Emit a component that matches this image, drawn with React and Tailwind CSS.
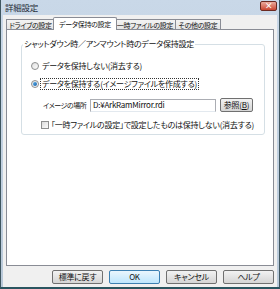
import React from 'react';

function Tab({ label, active, w }) {
  if (active) {
    return (
      <div
        className={`${w} h-[13px] -mx-[2px] relative z-10 bg-white border border-b-0 border-[#898c95] rounded-t-[2px] flex items-center justify-center pt-[1px]`}
      >
        {label}
      </div>
    );
  }
  return (
    <div
      className={`${w} h-[11px] mt-[2px] bg-gradient-to-b from-[#f3f3f3] to-[#e3e3e3] border border-b-0 border-[#898c95] -ml-[1px] first:ml-0 flex items-center justify-center pt-[1px]`}
    >
      {label}
    </div>
  );
}

function Radio({ checked }) {
  return (
    <div className="w-[8px] h-[8px] rounded-full border border-[#8e8f8f] bg-gradient-to-br from-[#e0e0e0] to-[#fdfdfd] flex items-center justify-center shrink-0">
      {checked && <div className="w-[4px] h-[4px] rounded-full bg-gradient-to-br from-[#59b2ef] to-[#1a5fa5]" />}
    </div>
  );
}

function Btn({ children, isDefault }) {
  return (
    <div
      className={`w-[51px] h-[14px] rounded-[2px] border flex items-center justify-center ${
        isDefault
          ? 'border-[#3c7fb1] bg-gradient-to-b from-[#eaf6fd] to-[#bee6fd]'
          : 'border-[#707070] bg-gradient-to-b from-[#f2f2f2] to-[#d5d5d5]'
      }`}
    >
      {children}
    </div>
  );
}

export default function App() {
  return (
    <div className="w-[280px] h-[289px] flex flex-col bg-gradient-to-b from-[#c9d8e8] to-[#b9c9d9] border border-t-0 border-[#3f5660] border-b-[2px] border-b-[#2a5560] leading-none font-['Noto_Sans_CJK_JP','Noto_Sans',sans-serif] [font-feature-settings:'palt'] text-[8px] tracking-[-0.25px] text-[#111] whitespace-nowrap">
      {/* title bar */}
      <div className="h-[15px] flex items-center justify-between pl-[4px] pr-[2px]">
        <span className="text-[8.5px] text-[#1e2a36]">詳細設定</span>
        <div className="w-[17px] h-[10px] mb-[3px] rounded-[2px] border border-[#6b2a22] bg-gradient-to-b from-[#e9a99c] to-[#c9432f] flex items-center justify-center text-white text-[8px] font-bold">
          ×
        </div>
      </div>

      {/* client area */}
      <div className="flex-1 mx-[2px] bg-[#f0f0f0] px-[3px] pt-[2px] flex flex-col">
        <div className="flex h-[12px] items-start text-[7px] tracking-[-0.3px]">
          <Tab label="ドライブの設定" w="w-[49px]" />
          <Tab label="データ保持の設定" w="w-[64px]" active />
          <Tab label="一時ファイルの設定" w="w-[62px]" />
          <Tab label="その他の設定" w="w-[46px]" />
        </div>

        <div className="h-[237px] bg-white border border-[#898c95] pt-[14px] pl-[14px] pr-[8px]">
          <div className="relative border border-[#d5dfe5] rounded-[3px] pt-[15px] pb-[3px] pl-[9px] pr-[8px]">
            <span className="absolute left-[1px] -top-[5px] bg-white px-[1px]">
              シャットダウン時／アンマウント時のデータ保持設定
            </span>

            <div className="h-[12px] flex items-center gap-[3px]">
              <Radio />
              <span>データを保持しない(消去する)</span>
            </div>

            <div className="h-[12px] mt-[6px] flex items-center gap-[2px]">
              <Radio checked />
              <span className="outline outline-1 outline-dotted outline-[#333] px-[1px] py-[1px]">
                データを保持する(イメージファイルを作成する)
              </span>
            </div>

            <div className="h-[14px] mt-[8px] flex items-center pl-[12px]">
              <span className="w-[47px] text-[7px] tracking-[-0.5px]">イメージの場所</span>
              <div className="w-[126px] h-[13px] border border-[#abadb3] border-b-[#e3e9ef] bg-white flex items-center pl-[2px]">
                D:¥ArkRamMirror.rdi
              </div>
              <div className="ml-[4px] w-[33px] h-[14px] rounded-[2px] border border-[#707070] bg-gradient-to-b from-[#f2f2f2] to-[#d5d5d5] flex items-center justify-center">
                参照(<span className="underline">B</span>)
              </div>
            </div>

            <div className="h-[12px] mt-[7px] flex items-center gap-[2px] pl-[10px]">
              <div className="w-[8px] h-[8px] border border-[#8e8f8f] bg-gradient-to-br from-[#dcdcdc] to-[#fbfbfb] shrink-0" />
              <span>「一時ファイルの設定」で設定したものは保持しない(消去する)</span>
            </div>
          </div>
        </div>

        <div className="flex gap-[6px] justify-end mt-[4px]">
          <Btn>標準に戻す</Btn>
          <Btn isDefault>OK</Btn>
          <Btn>キャンセル</Btn>
          <Btn>ヘルプ</Btn>
        </div>
      </div>
    </div>
  );
}
